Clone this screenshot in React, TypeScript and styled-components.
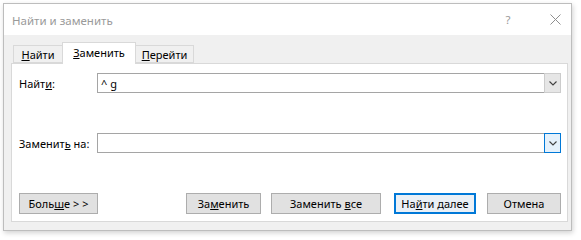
import styled, { createGlobalStyle } from 'styled-components'

const GlobalStyle = createGlobalStyle`
  html, body {
    margin: 0;
    padding: 0;
    background: #ffffff;
  }
  body {
    font-family: "Noto Sans", "Open Sans", Arial, sans-serif;
    font-size: 11px;
    color: #000000;
  }
`

const Page = styled.div`
  padding: 3px 0 0 3px;
  width: 581px;
  height: 240px;
  box-sizing: border-box;
`

const Window = styled.div`
  width: 569px;
  height: 228px;
  box-sizing: border-box;
  border: 1px solid #bdbdbd;
  background: #f0f0f0;
  box-shadow: 1px 2px 5px rgba(0, 0, 0, 0.18);
  display: flex;
  flex-direction: column;
`

const TitleBar = styled.div`
  height: 31px;
  flex: none;
  background: #ffffff;
  display: flex;
  align-items: center;
  padding: 0 0 0 8px;
`

const Title = styled.div`
  flex: 1;
  color: #9a9a9a;
  font-size: 11.5px;
  padding-top: 1px;
`

const TitleButton = styled.div<{ $w: number }>`
  width: ${p => p.$w}px;
  height: 31px;
  display: flex;
  align-items: center;
  justify-content: center;
  color: #9a9a9a;
  font-size: 11.5px;
`

const Body = styled.div`
  flex: 1;
  display: flex;
  flex-direction: column;
  padding: 7px 3px 8px 7px;
`

const TabRow = styled.div`
  display: flex;
  align-items: flex-end;
  height: 21px;
  padding-left: 2px;
  position: relative;
  z-index: 1;
`

const Tab = styled.div<{ $active?: boolean; $w: number }>`
  width: ${p => p.$w}px;
  box-sizing: border-box;
  height: ${p => (p.$active ? 22 : 18)}px;
  margin-bottom: ${p => (p.$active ? -1 : 0)}px;
  background: ${p => (p.$active ? '#ffffff' : '#f0f0f0')};
  border: 1px solid #d9d9d9;
  border-bottom: ${p => (p.$active ? 'none' : '1px solid #d9d9d9')};
  margin-left: ${p => (p.$active ? -1 : 0)}px;
  margin-right: ${p => (p.$active ? -1 : 0)}px;
  display: flex;
  align-items: center;
  justify-content: center;
  padding-bottom: ${p => (p.$active ? 3 : 0)}px;
`

const Panel = styled.div`
  flex: 1;
  background: #ffffff;
  border: 1px solid #d9d9d9;
  display: flex;
  flex-direction: column;
  padding: 9px 6px 7px 7px;
`

const FieldRow = styled.div<{ $top: number }>`
  display: flex;
  align-items: center;
  margin-top: ${p => p.$top}px;
`

const Label = styled.div`
  width: 78px;
  flex: none;
`

const Combo = styled.div`
  flex: 1;
  height: 20px;
  box-sizing: border-box;
  border: 1px solid #a5a5a5;
  display: flex;
  align-items: stretch;
  background: #ffffff;
`

const ComboText = styled.div`
  flex: 1;
  display: flex;
  align-items: center;
  padding-left: 3px;
`

const DropButton = styled.div<{ $focused?: boolean }>`
  width: 17px;
  margin: -1px -1px -1px 0;
  box-sizing: border-box;
  border: 1px solid ${p => (p.$focused ? '#0078d7' : '#cccccc')};
  background: ${p => (p.$focused ? '#e5f1fb' : '#e6e6e6')};
  display: flex;
  align-items: center;
  justify-content: center;
`

const ButtonRow = styled.div`
  display: flex;
  align-items: center;
  margin-top: 40px;
`

const Button = styled.div<{ $w: number; $gap?: number; $default?: boolean }>`
  width: ${p => p.$w}px;
  height: 21px;
  margin-left: ${p => p.$gap ?? 0}px;
  box-sizing: border-box;
  border: ${p => (p.$default ? '2px solid #0078d7' : '1px solid #adadad')};
  background: ${p => (p.$default ? '#eaf0f6' : '#e1e1e1')};
  display: flex;
  align-items: center;
  justify-content: center;
`

const Spacer = styled.div`
  flex: 1;
`

const Chevron = () => (
  <svg width="8" height="5" viewBox="0 0 8 5">
    <path d="M0.5 0.5 L4 4 L7.5 0.5" fill="none" stroke="#404040" strokeWidth="1.1" />
  </svg>
)

const CloseIcon = () => (
  <svg width="11" height="11" viewBox="0 0 11 11">
    <path d="M0.5 0.5 L10.5 10.5 M10.5 0.5 L0.5 10.5" stroke="#8f8f8f" strokeWidth="1" />
  </svg>
)

export default function App() {
  return (
    <>
      <GlobalStyle />
      <Page>
        <Window>
          <TitleBar>
            <Title>Найти и заменить</Title>
            <TitleButton $w={62}>?</TitleButton>
            <TitleButton $w={32}>
              <CloseIcon />
            </TitleButton>
          </TitleBar>
          <Body>
            <TabRow>
              <Tab $w={50}>
                <span>
                  <u>Н</u>айти
                </span>
              </Tab>
              <Tab $w={74} $active>
                <span>
                  <u>З</u>аменить
                </span>
              </Tab>
              <Tab $w={59}>
                <span>
                  <u>П</u>ерейти
                </span>
              </Tab>
            </TabRow>
            <Panel>
              <FieldRow $top={0}>
                <Label>
                  Найт<u>и</u>:
                </Label>
                <Combo>
                  <ComboText>^ g</ComboText>
                  <DropButton>
                    <Chevron />
                  </DropButton>
                </Combo>
              </FieldRow>
              <FieldRow $top={40}>
                <Label>
                  Заменит<u>ь</u> на:
                </Label>
                <Combo>
                  <ComboText />
                  <DropButton $focused>
                    <Chevron />
                  </DropButton>
                </Combo>
              </FieldRow>
              <ButtonRow>
                <Button $w={79}>
                  <span>
                    Боль<u>ш</u>е &gt; &gt;
                  </span>
                </Button>
                <Spacer />
                <Button $w={75}>
                  <span>
                    За<u>м</u>енить
                  </span>
                </Button>
                <Button $w={110} $gap={10}>
                  <span>
                    Заменить <u>в</u>се
                  </span>
                </Button>
                <Button $w={82} $gap={13} $default>
                  <span>
                    На<u>й</u>ти далее
                  </span>
                </Button>
                <Button $w={74} $gap={11}>
                  <span>Отмена</span>
                </Button>
              </ButtonRow>
            </Panel>
          </Body>
        </Window>
      </Page>
    </>
  )
}
